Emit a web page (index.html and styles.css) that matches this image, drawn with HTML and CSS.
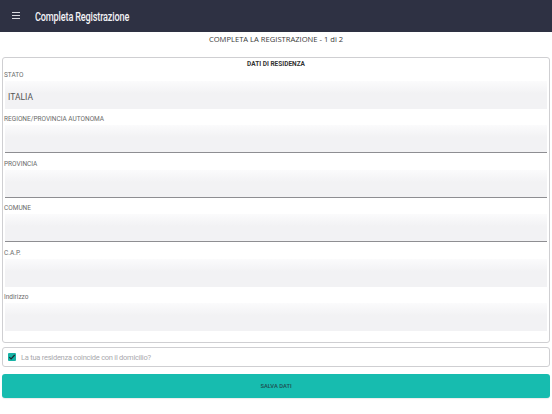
FILE: index.html
```html
<!DOCTYPE html>
<html lang="it">
<head>
    <meta charset="UTF-8">
    <meta name="viewport" content="width=device-width, initial-scale=1.0">
    <title>Completa Registrazione</title>
    <link rel="stylesheet" href="styles.css">
</head>
<body>
    <header class="topbar">
        <span class="menu-icon">
            <svg width="8" height="7" viewBox="0 0 8 7"><path d="M0 0.5h8M0 3.5h8M0 6.5h8" stroke="#d9dae0" stroke-width="1.1"/></svg>
        </span>
        <span class="topbar-title">Completa Registrazione</span>
    </header>

    <div class="step-title">COMPLETA LA REGISTRAZIONE - 1 di 2</div>

    <section class="card">
        <div class="card-title">DATI DI RESIDENZA</div>

        <div class="field-group">
            <div class="field-label">STATO</div>
            <div class="field"><span class="field-value">ITALIA</span></div>
        </div>
        <div class="field-group">
            <div class="field-label">REGIONE/PROVINCIA AUTONOMA</div>
            <div class="field select"></div>
        </div>
        <div class="field-group">
            <div class="field-label">PROVINCIA</div>
            <div class="field select"></div>
        </div>
        <div class="field-group">
            <div class="field-label">COMUNE</div>
            <div class="field select"></div>
        </div>
        <div class="field-group">
            <div class="field-label">C.A.P.</div>
            <div class="field"></div>
        </div>
        <div class="field-group">
            <div class="field-label">Indirizzo</div>
            <div class="field"></div>
        </div>
    </section>

    <label class="check-row">
        <span class="checkbox">
            <svg width="8" height="8" viewBox="0 0 8 8"><path d="M1.3 4.2l1.8 1.8 3.6-4" fill="none" stroke="#1d2b33" stroke-width="1.2"/></svg>
        </span>
        <span class="check-text">La tua residenza coincide con il domicilio?</span>
    </label>

    <button class="save-btn">SALVA DATI</button>
</body>
</html>
```

FILE: styles.css
```css
body {
    margin: 0;
    width: 552px;
    height: 414px;
    background: #fff;
    font-family: Roboto, "Liberation Sans", sans-serif;
    overflow: hidden;
}

.topbar {
    height: 32px;
    background: #2e3143;
    display: flex;
    align-items: center;
    padding-left: 12px;
    box-sizing: border-box;
}

.menu-icon {
    display: flex;
    width: 8px;
    margin-right: 15px;
    margin-top: -1px;
}

/* title font is a condensed face in the app */
.topbar-title {
    color: #f2f2f5;
    font-size: 12px;
    font-weight: 500;
    letter-spacing: -0.2px;
    margin-top: 1px;
    transform: scaleX(0.76);
    transform-origin: left center;
}

.step-title {
    height: 25px;
    padding-top: 1px;
    box-sizing: border-box;
    text-align: center;
    font-family: "Open Sans", sans-serif;
    font-size: 7.6px;
    line-height: 12px;
    color: #3a3a3a;
}

.card {
    margin: 0 2px;
    border: 1px solid #cfcfd2;
    border-radius: 3px;
    padding-bottom: 6px;
}

.card-title {
    height: 12px;
    line-height: 12px;
    text-align: center;
    font-size: 6.5px;
    font-weight: 700;
    color: #333;
}

.field-group {
    margin-bottom: 5.4px;
}

.field-label {
    height: 11px;
    line-height: 11px;
    font-size: 6.5px;
    color: #6b6b6b;
    padding-left: 1px;
}

.field {
    height: 28px;
    margin: 0 2px;
    background: linear-gradient(#fbfbfc, #f2f2f4 45%, #f2f2f4);
    display: flex;
    align-items: center;
    box-sizing: border-box;
}

.field.select {
    border-bottom: 1px solid #8e8e92;
}

.field-value {
    font-size: 8.5px;
    color: #555;
    padding-left: 3px;
    margin-top: 3px;
}

.check-row {
    margin: 4px 2px 0;
    height: 20px;
    border: 1px solid #cfcfd2;
    border-radius: 3px;
    display: flex;
    align-items: center;
    padding-left: 5px;
    box-sizing: border-box;
}

.checkbox {
    width: 8px;
    height: 8px;
    background: #17b3a6;
    border-radius: 1px;
    display: flex;
    margin-right: 5px;
}

.check-text {
    font-size: 7.5px;
    color: #a9a9ad;
    letter-spacing: -0.25px;
}

.save-btn {
    display: block;
    margin: 7px 2px 0;
    width: 548px;
    height: 24px;
    border: none;
    border-radius: 3px;
    background: #17bcaf;
    box-shadow: 0 1px 1px rgba(0, 0, 0, 0.08);
    color: #1f4d4f;
    font-family: Roboto, sans-serif;
    font-size: 5.8px;
    font-weight: 500;
    padding: 0;
}
```
